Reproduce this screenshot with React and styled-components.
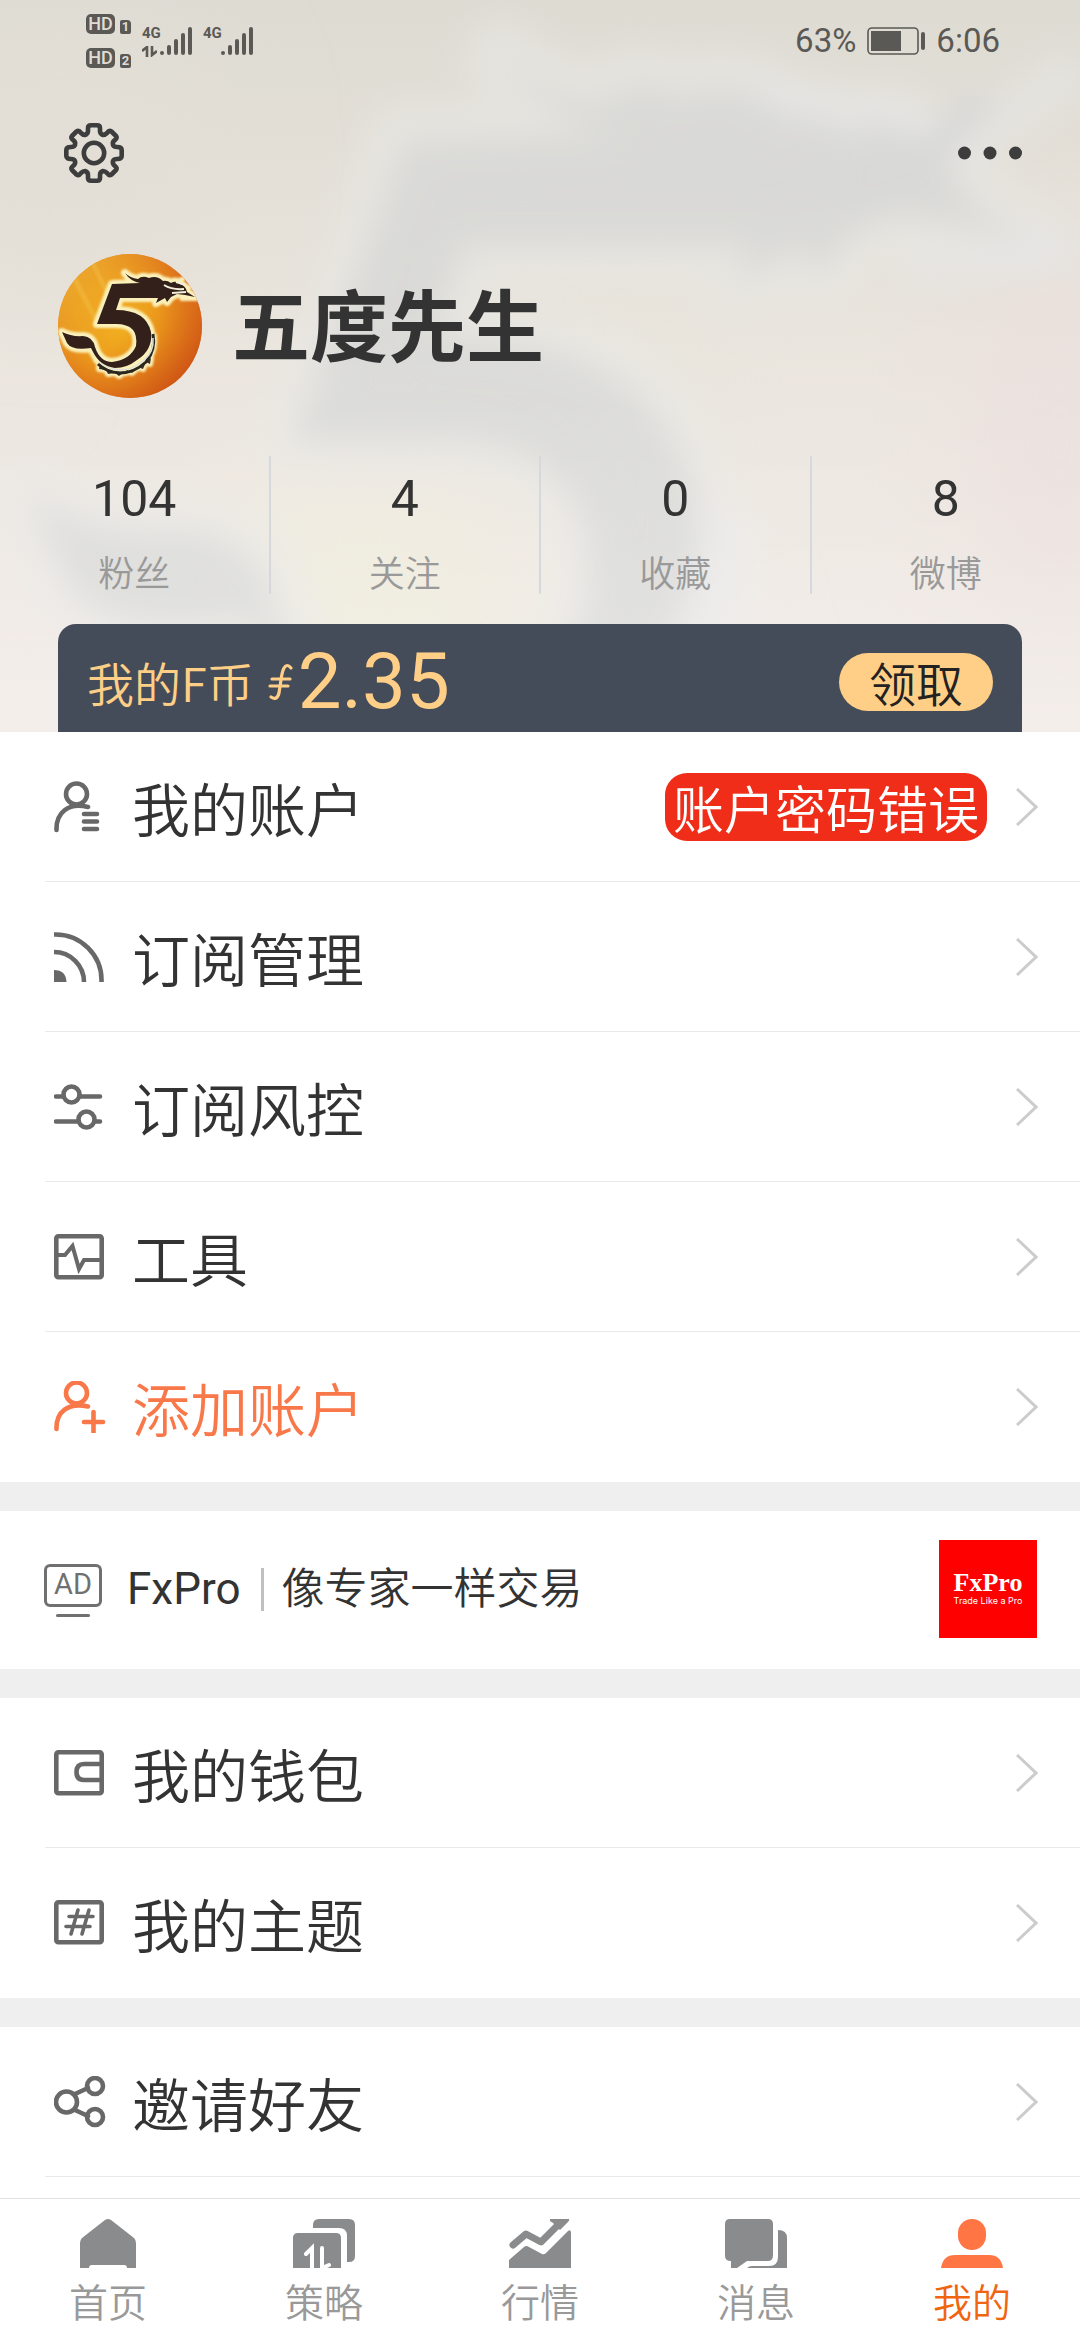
import React from 'react';
import styled, { createGlobalStyle } from 'styled-components';

const GlobalStyle = createGlobalStyle`
  * {
    box-sizing: border-box;
  }
  body {
    margin: 0;
    background: #fff;
    color: #333;
    font-family: 'Noto Sans CJK SC', sans-serif;
    font-weight: 350;
  }
  a {
    color: inherit;
    text-decoration: none;
  }
  button {
    font-family: inherit;
    font-weight: inherit;
    border: none;
    padding: 0;
    background: none;
    cursor: pointer;
  }
  svg {
    display: block;
    flex: none;
  }
`;

const Page = styled.div`
  display: flex;
  flex-direction: column;
  height: 100vh;
`;

const Content = styled.main`
  flex: 1;
  min-height: 0;
  overflow-y: auto;
`;

const Header = styled.header`
  position: relative;
  overflow: hidden;
  padding: 0 58px;
  background: linear-gradient(#dedbd3, #e9e4dc 45%, #f1e9e5);
`;

const Backdrop = styled.svg`
  position: absolute;
  top: 0;
  left: 0;
  width: 100%;
  height: 100%;
`;

const HeaderBody = styled.div`
  position: relative;
`;

const StatusBar = styled.div`
  display: flex;
  align-items: center;
  justify-content: space-between;
  height: 80px;
  padding: 2px 22px 0 28px;
  color: #5a5955;
  font-family: Roboto, sans-serif;
  font-weight: 400;
`;

const StatusGroup = styled.div`
  display: flex;
  align-items: center;
  gap: ${({ $gap }) => $gap}px;
`;

const HdList = styled.div`
  display: flex;
  flex-direction: column;
  gap: 14px;
`;

const HdItem = styled.div`
  display: flex;
  align-items: flex-end;
  gap: 5px;
`;

const HdBadge = styled.span`
  width: 29px;
  border-radius: 5px;
  background: #5a5955;
  color: #e0ddd5;
  font-size: 18px;
  font-weight: 500;
  line-height: 20px;
  text-align: center;
`;

const SimBadge = styled.span`
  width: 11px;
  border-radius: 2px 4px 2px 2px;
  background: #5a5955;
  color: #e0ddd5;
  font-size: 13px;
  font-weight: 700;
  line-height: 14px;
  text-align: center;
`;

const Signal = styled.div`
  display: flex;
  align-items: flex-end;
`;

const Network = styled.div`
  display: flex;
  flex-direction: column;
  width: 17px;
  height: 32px;
  font-size: 15px;
  font-weight: 700;
  line-height: 16px;
  gap: 5px;
`;

const StatusText = styled.span`
  font-size: 33px;
  line-height: 40px;
`;

const Toolbar = styled.div`
  display: flex;
  align-items: center;
  justify-content: space-between;
  margin-top: 43px;
  padding-left: 6px;
`;

const IconButton = styled.button`
  display: flex;
  align-items: center;
  height: 60px;
`;

const Profile = styled.div`
  display: flex;
  align-items: center;
  gap: 30px;
  margin-top: 71px;
`;

const Name = styled.h1`
  margin: 0;
  padding-bottom: 8px;
  font-size: 78px;
  font-weight: 700;
  line-height: 136px;
`;

const Stats = styled.div`
  display: flex;
  margin: 58px -58px 0;
`;

const Stat = styled.a`
  flex: 1;
  display: flex;
  flex-direction: column;
  align-items: center;
  gap: 19px;
  height: 138px;
  padding-top: 13px;

  & + & {
    border-left: 2px solid #d7d7de;
  }
`;

const StatValue = styled.span`
  font-family: Roboto, sans-serif;
  font-size: 50px;
  font-weight: 400;
  line-height: 60px;
`;

const StatLabel = styled.span`
  color: #999;
  font-size: 36px;
  line-height: 46px;
`;

const CoinCard = styled.section`
  display: flex;
  align-items: center;
  justify-content: space-between;
  height: 108px;
  margin-top: 30px;
  padding: 8px 29px 0;
  border-radius: 18px 18px 0 0;
  background: #454c59;
  color: #ffcf87;
`;

const CoinBalance = styled.div`
  display: flex;
  align-items: center;
`;

const CoinLabel = styled.span`
  font-size: 47px;
  line-height: 60px;
`;

const CoinSign = styled.svg`
  margin: 0 4px 0 14px;
`;

const CoinAmount = styled.span`
  font-family: Roboto, sans-serif;
  font-size: 78px;
  font-weight: 400;
  line-height: 96px;
`;

const ClaimButton = styled.button`
  width: 154px;
  height: 58px;
  border-radius: 29px;
  background: #ffcf87;
  color: #222;
  font-size: 47px;
  line-height: 50px;
`;

const Section = styled.section`
  & + & {
    border-top: 29px solid #efefef;
  }
`;

const Row = styled.a`
  display: flex;
  align-items: center;
  height: 150px;
  margin-left: 45px;
  padding: 0 42px 0 9px;
  border-bottom: 1px solid ${({ $last }) => ($last ? 'transparent' : '#e9e9e9')};
  color: ${({ $accent }) => ($accent ? '#f9784a' : '#333')};
`;

const RowIcon = styled.svg`
  width: 52px;
  height: 52px;
  color: ${({ $accent }) => ($accent ? '#f9784a' : '#686868')};
`;

const RowLabel = styled.span`
  flex: 1;
  margin-left: 26px;
  font-size: 58px;
  line-height: 80px;
`;

const Alert = styled.span`
  margin-right: 29px;
  padding: 0 8px;
  border-radius: 22px;
  background: #ef2d18;
  color: #fff;
  font-size: 51px;
  line-height: 68px;
`;

const AdRow = styled.a`
  display: flex;
  align-items: center;
  height: 158px;
  padding: 0 43px 2px 44px;
`;

const AdIcon = styled.div`
  display: flex;
  flex-direction: column;
  align-items: center;
  gap: 7px;
  padding-top: 2px;

  &::after {
    content: '';
    width: 34px;
    height: 3px;
    border-radius: 2px;
    background: #707070;
  }
`;

const AdBox = styled.span`
  width: 58px;
  padding-bottom: 3px;
  border: 3px solid #707070;
  border-radius: 6px;
  color: #707070;
  font-family: Roboto, sans-serif;
  font-size: 29px;
  font-weight: 400;
  line-height: 34px;
  text-align: center;
`;

const AdText = styled.span`
  display: flex;
  flex: 1;
  align-items: center;
  margin-left: 25px;
  font-family: Roboto, 'Noto Sans CJK SC', sans-serif;
  font-size: 43px;
  line-height: 60px;
`;

const AdBrand = styled.span`
  padding-right: 4px;
  font-size: 44px;
  font-weight: 400;
`;

const AdDivider = styled.span`
  width: 3px;
  height: 43px;
  margin: 0 17px;
  background: #c0c0c0;
`;

const FxLogo = styled.div`
  display: flex;
  flex-direction: column;
  align-items: center;
  justify-content: center;
  width: 98px;
  height: 98px;
  background: #f00;
  color: #fff;
`;

const FxName = styled.span`
  font-family: 'Liberation Serif', serif;
  font-size: 26px;
  font-weight: 700;
  line-height: 24px;
`;

const FxSlogan = styled.span`
  font-family: Inter, sans-serif;
  font-size: 9px;
  font-weight: 400;
  line-height: 12px;
`;

const TabBar = styled.nav`
  display: flex;
  height: 142px;
  border-top: 1px solid #e2e2e2;
  background: #fff;
`;

const Tab = styled.a`
  flex: 1;
  display: flex;
  flex-direction: column;
  align-items: center;
  gap: 6px;
  padding-top: 20px;
  color: ${({ $active }) => ($active ? '#f0650f' : '#999')};
  font-size: 39px;
  line-height: 52px;
`;

const TabIcon = styled.svg`
  width: 62px;
  height: 49px;
  color: ${({ $active }) => ($active ? '#ff7543' : '#8a8b8d')};
`;

const FIVE =
  'M54 30 L82 29 Q72 27 67 19 Q72 24 80 25 Q84 21 91 24 Q99 21 105 27 Q109 26 113 29 Q118 26 122 30 Q128 32 129 38 L137 43 L127 41 L119 40 L113 43 L109 48 L107 44 L98 49 L100 44 L62 44 L58 56 Q88 56 93 78 Q95 96 79 106 Q69 114 57 114 Q42 112 35 98 L33 94 Q14 97 9 89 L4 78 Q14 83 25 82 Q35 83 37 93 Q42 108 54 108 Q72 106 78 92 Q81 70 58 70 L39 70 Z';
const SHADOW = 'M95 80 Q98 96 88 108 Q76 119 62 119 Q48 118 40 110';
const FRINGE = 'M93 104L92 110L88 108L85 115L80 113L74 119L69 116L61 122L57 119L50 120L48 116L41 115L42 110L38 106Q48 118 62 118Q80 117 89 106Z';

const Avatar = () => (
  <svg width="144" height="144" viewBox="0 0 144 144" role="img" aria-label="五度先生">
    <defs>
      <radialGradient id="sun" cx="42%" cy="48%" r="72%">
        <stop offset="0" stopColor="#f7c024" />
        <stop offset="0.4" stopColor="#eda01c" />
        <stop offset="0.75" stopColor="#d8621a" />
        <stop offset="1" stopColor="#b83a12" />
      </radialGradient>
      <linearGradient id="glow" x1="0" y1="0" x2="1" y2="1">
        <stop offset="0" stopColor="#f3c43a" stopOpacity="0.9" />
        <stop offset="0.5" stopColor="#e9901c" stopOpacity="0.3" />
        <stop offset="1" stopColor="#c23e10" stopOpacity="0.9" />
      </linearGradient>
      <clipPath id="round">
        <circle cx="72" cy="72" r="72" />
      </clipPath>
      <filter id="soft">
        <feGaussianBlur stdDeviation="1.2" />
      </filter>
    </defs>
    <g clipPath="url(#round)">
      <rect width="144" height="144" fill="url(#sun)" />
      <rect width="144" height="144" fill="url(#glow)" />
      <path d="M30 0 L60 60 M14 20 L40 70" stroke="#f6cf58" strokeWidth="5" opacity="0.3" filter="url(#soft)" />
      <g fill="none" stroke="#fbf0b8" strokeLinejoin="round" filter="url(#soft)">
        <path d={FIVE} strokeWidth="8" />
        <path d={SHADOW} strokeWidth="7" />
        <path d={FRINGE} strokeWidth="6" />
        <path d="M113 29 L127 24 M128 33 L140 32 M122 45 L144 45" strokeWidth="4" />
      </g>
      <path d={FRINGE} fill="#3a3226" />
      <path d={SHADOW} fill="none" stroke="#2a2620" strokeWidth="3" />
      <path d="M95 84 Q96 98 86 106 Q75 116 62 116 Q49 115 41 107" fill="none" stroke="#dfe2dc" strokeWidth="1.6" />
      <path d={FIVE} fill="#33201a" />
      <path d="M106 31 Q114 36 126 35 M114 39 L128 38 M118 28 L128 31" fill="none" stroke="#f5f0da" strokeWidth="2" />
    </g>
  </svg>
);

const HeaderBackdrop = () => (
  <Backdrop viewBox="0 0 1080 732" preserveAspectRatio="xMidYMid slice" aria-hidden="true">
    <defs>
      <filter id="haze" x="-20%" y="-20%" width="140%" height="140%">
        <feGaussianBlur stdDeviation="2" />
      </filter>
      <filter id="wash" x="-50%" y="-50%" width="200%" height="200%">
        <feGaussianBlur stdDeviation="60" />
      </filter>
      <linearGradient id="lift" x1="0" y1="0" x2="0" y2="1">
        <stop offset="0.4" stopColor="#fff" stopOpacity="0" />
        <stop offset="1" stopColor="#fff" stopOpacity="0.25" />
      </linearGradient>
    </defs>
    <g filter="url(#wash)">
      <ellipse cx="360" cy="600" rx="170" ry="120" fill="#eeeadb" />
      <ellipse cx="60" cy="150" rx="150" ry="120" fill="#e3dfd6" />
      <ellipse cx="1060" cy="440" rx="110" ry="200" fill="#eae0dd" />
      <ellipse cx="620" cy="380" rx="140" ry="60" fill="#e8e5db" />
    </g>
    <g transform="translate(0 -84) scale(7.5)" filter="url(#haze)" strokeLinejoin="round">
      <path d={FIVE} fill="none" stroke="#e7e8e5" strokeWidth="10" opacity="0.6" />
      <path d="M100 24 L130 30 L144 20 M120 48 L144 44" fill="none" stroke="#e6e6e4" strokeWidth="6" opacity="0.6" />
      <path d={SHADOW} fill="none" stroke="#e9eae8" strokeWidth="10" opacity="0.6" />
      <path d={FIVE} fill="#d8d8d7" opacity="0.9" />
      <path d="M112 36 Q124 34 131 24" fill="none" stroke="#d8d8d7" strokeWidth="4" />
    </g>
    <rect width="1080" height="732" fill="url(#lift)" />
  </Backdrop>
);

const SignalBars = () => (
  <svg width="33" height="32" viewBox="0 0 33 32" stroke="currentColor" strokeWidth="4" strokeLinecap="round">
    <path d="M3 28v0M10 22v6M17 16v12M24 10v18M31 4v24" />
  </svg>
);

const Gear = () => (
  <svg width="60" height="60" viewBox="0 0 60 60" fill="none" stroke="#3d3d3d" strokeWidth="4.6" strokeLinejoin="round">
    <path d="M24 5Q24 2.300 27 2.300H33Q36 2.300 36 5V8Q36 11 39 12Q41 12 43 10Q45 7 47.500 8.500L52 13Q53.500 15 51 17Q48 19 49 22Q50 24 53 24Q57.700 24 57.700 27V33Q57.700 36 53 36Q50 36 49 38Q48 41 51 43Q53.500 45 52 47L47.500 51.500Q45 53 43 50Q41 48 39 48Q36 49 36 52V55Q36 57.700 33 57.700H27Q24 57.700 24 55V52Q24 49 21 48Q19 48 17 50Q15 53 12.500 51.500L8 47Q6.500 45 9 43Q12 41 11 38Q10 36 7 36Q2.300 36 2.300 33V27Q2.300 24 7 24Q10 24 11 22Q12 19 9 17Q6.500 15 8 13L12.500 8.500Q15 7 17 10Q19 12 21 12Q24 11 24 8Z" />
    <circle cx="30" cy="30" r="10.2" />
  </svg>
);

const Chevron = () => (
  <svg width="22" height="38" viewBox="0 0 22 38" fill="none" stroke="#ccc" strokeWidth="3">
    <path d="M1 1L20 19L1 37" />
  </svg>
);

const ICONS = {
  account: (
    <>
      <ellipse cx="22.500" cy="13" rx="10.500" ry="10.500" />
      <path d="M2.500 49C2 32 14 21 34 26M30 33H43M30 40.500H43M30 48H43" />
    </>
  ),
  feed: (
    <>
      <path d="M0 3.500A46 46 0 0 1 47.500 51M0 21A30 30 0 0 1 30 51" strokeLinecap="butt" />
      <path d="M0 39Q12 39 12.500 51H0Z" fill="currentColor" stroke="none" />
    </>
  ),
  sliders: (
    <>
      <circle cx="17.500" cy="13.500" r="8" />
      <circle cx="32.500" cy="38.500" r="8" />
      <path d="M2 15.500H9M27 15.500H46M2 40.500H24M41 40.500H46" />
    </>
  ),
  tools: (
    <>
      <rect x="2.300" y="5.300" width="45.400" height="41" rx="2" />
      <path d="M3 24H11L18.500 15L25 38L30 29H47" strokeLinecap="butt" strokeLinejoin="miter" strokeWidth="4" />
    </>
  ),
  addAccount: (
    <>
      <ellipse cx="22.500" cy="12" rx="10.500" ry="10.500" />
      <path d="M2.500 48C2 31 14 21 34 25.500M30 41H49M39.500 31V51" />
    </>
  ),
  wallet: (
    <>
      <rect x="2.300" y="5.300" width="45.400" height="41" rx="2" />
      <path d="M47 17H30Q22.500 17 22.500 25Q22.500 33 30 33H47" />
    </>
  ),
  topic: (
    <>
      <rect x="2.300" y="5.300" width="45.400" height="40" rx="2" />
      <path d="M24 13L17 37M35 13L28 37M15 19.500H39M12 29.500H36" strokeWidth="3.600" />
    </>
  ),
  share: (
    <>
      <circle cx="12.500" cy="26" r="10.500" />
      <circle cx="41" cy="10" r="8" />
      <circle cx="41" cy="41" r="8" />
      <path d="M21 18L34 12M21 34L34 40" />
    </>
  ),
};

const MenuRow = ({ icon, label, alert, accent, last }) => (
  <Row href="#" $accent={accent} $last={last}>
    <RowIcon
      $accent={accent}
      viewBox="0 0 52 52"
      fill="none"
      stroke="currentColor"
      strokeWidth="4.6"
      strokeLinecap="round"
      strokeLinejoin="round"
      aria-hidden="true"
    >
      {ICONS[icon]}
    </RowIcon>
    <RowLabel>{label}</RowLabel>
    {alert && <Alert>{alert}</Alert>}
    <Chevron />
  </Row>
);

const stats = [
  { value: 104, label: '粉丝' },
  { value: 4, label: '关注' },
  { value: 0, label: '收藏' },
  { value: 8, label: '微博' },
];

const accountRows = [
  { icon: 'account', label: '我的账户', alert: '账户密码错误' },
  { icon: 'feed', label: '订阅管理' },
  { icon: 'sliders', label: '订阅风控' },
  { icon: 'tools', label: '工具' },
  { icon: 'addAccount', label: '添加账户', accent: true, last: true },
];

const tabs = [
  {
    label: '首页',
    icon: <path d="M3 24Q3 21 5 19L28 1Q31 -1 34 1L57 19Q59 21 59 24V49H50Q50 46 47 46H15Q12 46 12 49H3Z" />,
  },
  {
    label: '策略',
    icon: (
      <>
        <path d="M20 9V6Q20 0 26 0H56Q62 0 62 6V37Q62 43 56 43H54V17Q54 9 46 9Z" />
        <path d="M0 49V19Q0 14 5 14H43Q48 14 48 19V49Z" />
        <path d="M13 35L19 29V49M29 29V49L36 46" fill="none" stroke="#fff" strokeWidth="4" strokeLinecap="round" />
      </>
    ),
  },
  {
    label: '行情',
    icon: (
      <>
        <path d="M4 26L17 15L32 23L51 4" fill="none" stroke="currentColor" strokeWidth="7" strokeLinecap="round" strokeLinejoin="round" />
        <path d="M41 0H60Q61 1 59 3L51 11L44 4L41 2Z" />
        <path d="M0 41L15 28Q17 26 20 28L33 35Q35 36 37 34L59 12Q62 10 62 14V49H0Z" />
      </>
    ),
  },
  {
    label: '消息',
    icon: (
      <>
        <path d="M5 0H43Q48 0 48 5V36Q48 42 43 42H22L12 49H6V42Q0 42 0 37V5Q0 0 5 0Z" />
        <path d="M53 11Q62 11 62 19V49H22Q24 47 27 47H44Q53 47 53 38Z" />
      </>
    ),
  },
  {
    label: '我的',
    active: true,
    icon: (
      <>
        <rect x="17" y="0" width="28" height="31" rx="14" />
        <path d="M0 49Q2 36 14 36H48Q60 36 62 49Z" />
      </>
    ),
  },
];

const App = () => (
  <Page>
    <GlobalStyle />
    <Content>
      <Header>
        <HeaderBackdrop />
        <HeaderBody>
          <StatusBar>
            <StatusGroup $gap={11}>
              <HdList>
                <HdItem>
                  <HdBadge>HD</HdBadge>
                  <SimBadge>1</SimBadge>
                </HdItem>
                <HdItem>
                  <HdBadge>HD</HdBadge>
                  <SimBadge>2</SimBadge>
                </HdItem>
              </HdList>
              <Signal>
                <Network>
                  4G
                  <svg width="15" height="11" viewBox="0 0 15 11" fill="none" stroke="currentColor" strokeWidth="2.6">
                    <path d="M0 5L5 1V11M10 0V9L15 5" />
                  </svg>
                </Network>
                <SignalBars />
              </Signal>
              <Signal>
                <Network>4G</Network>
                <SignalBars />
              </Signal>
            </StatusGroup>
            <StatusGroup $gap={11}>
              <StatusText>63%</StatusText>
              <svg width="58" height="28" viewBox="0 0 58 28" fill="none" stroke="currentColor">
                <rect x="1" y="1" width="50" height="26" rx="4" strokeWidth="1.6" />
                <rect x="4" y="4" width="30" height="20" fill="currentColor" stroke="none" />
                <path d="M56 7V21" strokeWidth="4" strokeLinecap="round" />
              </svg>
              <StatusText>6:06</StatusText>
            </StatusGroup>
          </StatusBar>
          <Toolbar>
            <IconButton aria-label="设置">
              <Gear />
            </IconButton>
            <IconButton aria-label="更多">
              <svg width="64" height="14" viewBox="0 0 64 14" fill="#3d3d3d">
                <circle cx="6.500" cy="7" r="6.500" />
                <circle cx="32" cy="7" r="6.500" />
                <circle cx="57.500" cy="7" r="6.500" />
              </svg>
            </IconButton>
          </Toolbar>
          <Profile>
            <Avatar />
            <Name>五度先生</Name>
          </Profile>
          <Stats>
            {stats.map(({ value, label }) => (
              <Stat href="#" key={label}>
                <StatValue>{value}</StatValue>
                <StatLabel>{label}</StatLabel>
              </Stat>
            ))}
          </Stats>
          <CoinCard>
            <CoinBalance>
              <CoinLabel>我的F币</CoinLabel>
              <CoinSign width="26" height="38" viewBox="0 0 26 38" fill="none" stroke="currentColor" strokeWidth="3.200" strokeLinecap="round">
                <path d="M23 5Q19 0 16 5Q14 9 13 17L11 30Q9 38 3 34M4 16H22M2 23H20" />
              </CoinSign>
              <CoinAmount>2.35</CoinAmount>
            </CoinBalance>
            <ClaimButton>领取</ClaimButton>
          </CoinCard>
        </HeaderBody>
      </Header>

      <Section>
        {accountRows.map((row) => (
          <MenuRow key={row.label} {...row} />
        ))}
      </Section>
      <Section>
        <AdRow href="#">
          <AdIcon>
            <AdBox>AD</AdBox>
          </AdIcon>
          <AdText>
            <AdBrand>FxPro</AdBrand>
            <AdDivider />
            像专家一样交易
          </AdText>
          <FxLogo>
            <FxName>FxPro</FxName>
            <FxSlogan>Trade Like a Pro</FxSlogan>
          </FxLogo>
        </AdRow>
      </Section>
      <Section>
        <MenuRow icon="wallet" label="我的钱包" />
        <MenuRow icon="topic" label="我的主题" last />
      </Section>
      <Section>
        <MenuRow icon="share" label="邀请好友" />
      </Section>
    </Content>

    <TabBar>
      {tabs.map(({ label, icon, active }) => (
        <Tab href="#" key={label} $active={active}>
          <TabIcon $active={active} viewBox="0 0 62 49" fill="currentColor" aria-hidden="true">
            {icon}
          </TabIcon>
          {label}
        </Tab>
      ))}
    </TabBar>
  </Page>
);

export default App;
